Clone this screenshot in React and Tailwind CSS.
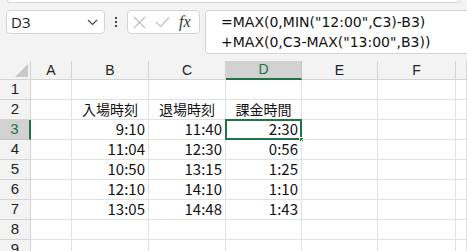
import React from 'react';

const cols = ['A', 'B', 'C', 'D', 'E', 'F', ''];
const rows = [
    ['', '', '', ''],
    ['', '入場時刻', '退場時刻', '課金時間'],
    ['', '9:10', '11:40', '2:30'],
    ['', '11:04', '12:30', '0:56'],
    ['', '10:50', '13:15', '1:25'],
    ['', '12:10', '14:10', '1:10'],
    ['', '13:05', '14:48', '1:43'],
    ['', '', '', ''],
    ['', '', '', ''],
];

function FormulaBar() {
    return (
        <div className="h-[61px] bg-[#f3f3f3] relative">
            <div className="mx-[7px] h-[3px] bg-white border-b border-x border-[#d6d6d6] rounded-b-[4px]" />
            <div className="flex items-start pt-[7px] pl-[6px]">
                <div className="w-[99px] h-[24px] bg-white border border-[#d4d4d4] rounded-[4px] flex items-center justify-between pl-[4px] pr-[6px]">
                    <span className="text-[15px] text-[#222]" style={{ fontFamily: '"Open Sans", "Noto Sans", sans-serif' }}>D3</span>
                    <svg width="11" height="7" viewBox="0 0 11 7">
                        <path d="M1 1 L5.5 5.5 L10 1" fill="none" stroke="#444" strokeWidth="1.2" />
                    </svg>
                </div>
                <div className="w-[22px] h-[24px] flex flex-col items-center justify-center gap-[2px]">
                    <span className="w-[2px] h-[2px] bg-[#444]" />
                    <span className="w-[2px] h-[2px] bg-[#444]" />
                    <span className="w-[2px] h-[2px] bg-[#444]" />
                </div>
                <div className="w-[73px] h-[24px] bg-white border border-[#d4d4d4] rounded-[4px] flex items-center pl-[5px] gap-[9px]">
                    <svg width="13" height="13" viewBox="0 0 13 13">
                        <path d="M1 1 L12 12 M12 1 L1 12" stroke="#bdbdbd" strokeWidth="1.1" />
                    </svg>
                    <svg width="15" height="12" viewBox="0 0 15 12">
                        <path d="M1 6 L5.5 10.5 L14 1.5" fill="none" stroke="#bdbdbd" strokeWidth="1.1" />
                    </svg>
                    <span className="italic text-[16px] text-[#333] leading-none" style={{ fontFamily: '"Liberation Serif", serif' }}>
                        <span className="font-normal">f</span><span>x</span>
                    </span>
                </div>
                <div className="ml-[5px] flex-1 h-[44px] bg-white border border-r-0 border-[#d4d4d4] rounded-l-[4px] pl-[15px] pt-[1px] text-[14px] leading-[20px] text-[#111]" style={{ fontFamily: '"DejaVu Sans", Verdana, sans-serif' }}>
                    <div>=MAX(0,MIN("12:00",C3)-B3)</div>
                    <div>+MAX(0,C3-MAX("13:00",B3))</div>
                </div>
            </div>
        </div>
    );
}

function Grid() {
    const colW = 'grid-cols-[31px_41px_77px_77px_76px_76px_78px_1fr]';
    return (
        <div className={`grid ${colW} bg-white`} style={{ fontFamily: '"Noto Sans CJK JP", sans-serif' }}>
            <div className="h-[19px] bg-[#f3f3f3] border-r border-b border-[#d4d4d4] relative">
                <svg className="absolute right-[2px] bottom-[2px]" width="13" height="13" viewBox="0 0 13 13">
                    <path d="M13 0 L13 13 L0 13 Z" fill="#c8c8c8" />
                </svg>
            </div>
            {cols.map((c, i) => (
                <div
                    key={c + i}
                    className={
                        c === 'D'
                            ? 'h-[19px] bg-[#d2d2d2] border-r border-[#c4c4c4] border-b-2 border-b-[#217346] text-[#217346] flex items-center justify-center text-[14px]'
                            : 'h-[19px] bg-[#f3f3f3] border-r border-b border-[#d4d4d4] text-[#222] flex items-center justify-center text-[14px]'
                    }
                    style={{ fontFamily: '"Liberation Sans", Arial, sans-serif' }}
                >
                    {c}
                </div>
            ))}
            {rows.map((r, ri) => (
                <React.Fragment key={ri}>
                    <div
                        className={
                            ri === 2
                                ? 'h-[20px] bg-[#d2d2d2] border-b border-[#c4c4c4] border-r-2 border-r-[#217346] text-[#217346] flex items-center justify-center text-[15px]'
                                : 'h-[20px] bg-[#f3f3f3] border-r border-b border-[#d4d4d4] text-[#222] flex items-center justify-center text-[15px]'
                        }
                        style={{ fontFamily: '"Liberation Sans", Arial, sans-serif' }}
                    >
                        {ri + 1}
                    </div>
                    {[0, 1, 2, 3, 4, 5, 6].map((ci) => {
                        const v = ci < 4 ? r[ci] : '';
                        const isHead = ri === 1;
                        const sel = ri === 2 && ci === 3;
                        return (
                            <div
                                key={ci}
                                className={`h-[20px] border-r border-b border-[#e1e1e1] flex items-end pb-[1px] leading-[18px] text-[#111] relative ${isHead ? 'justify-center text-[14px]' : 'justify-end pr-[3px] text-[15px]'}`}
                            >
                                {v}
                                {sel && (
                                    <>
                                        <span className="absolute -left-[1px] -top-[1px] -right-[1px] -bottom-[1px] border-2 border-[#217346]" />
                                        <span className="absolute -right-[3px] -bottom-[3px] w-[5px] h-[5px] bg-[#217346] border border-white" />
                                    </>
                                )}
                            </div>
                        );
                    })}
                </React.Fragment>
            ))}
        </div>
    );
}

export default function App() {
    return (
        <div className="w-[467px] h-[251px] overflow-hidden bg-white">
            <FormulaBar />
            <Grid />
        </div>
    );
}
